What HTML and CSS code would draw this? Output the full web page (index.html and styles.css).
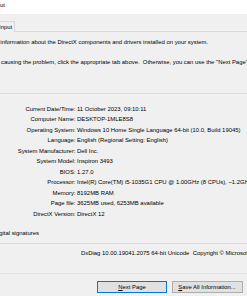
FILE: index.html
```html
<!DOCTYPE html>
<html>
<head>
<meta charset="utf-8">
<link rel="stylesheet" href="styles.css">
</head>
<body>
<div class="window">
  <div class="titlebar"><span class="title">ut</span></div>
  <div class="tabs">
    <div class="tab">Input</div>
  </div>
  <div class="page">
    <p class="intro first">This tool reports detailed information about the DirectX components and drivers installed on your system.</p>
    <p class="intro second">If you know what area is causing the problem, click the appropriate tab above.&nbsp; Otherwise, you can use the "Next Page" button below to visit each page in sequence.</p>
    <div class="group">
      <dl class="info">
        <dt>Current Date/Time:</dt><dd>11 October 2023, 09:10:11</dd>
        <dt>Computer Name:</dt><dd>DESKTOP-1MLE8S8</dd>
        <dt>Operating System:</dt><dd>Windows 10 Home Single Language 64-bit (10.0, Build 19045)</dd>
        <dt>Language:</dt><dd>English (Regional Setting: English)</dd>
        <dt>System Manufacturer:</dt><dd>Dell Inc.</dd>
        <dt>System Model:</dt><dd>Inspiron 3493</dd>
        <dt>BIOS:</dt><dd>1.27.0</dd>
        <dt>Processor:</dt><dd>Intel(R) Core(TM) i5-1035G1 CPU @ 1.00GHz (8 CPUs), ~1.2GHz</dd>
        <dt>Memory:</dt><dd>8192MB RAM</dd>
        <dt>Page file:</dt><dd>3625MB used, 6253MB available</dd>
        <dt>DirectX Version:</dt><dd>DirectX 12</dd>
      </dl>
    </div>
    <p class="check">Check for WHQL digital signatures</p>
    <div class="version">DxDiag 10.00.19041.2075 64-bit Unicode&nbsp; Copyright © Microsoft. All rights reserved.</div>
  </div>
  <div class="buttons">
    <button class="btn default"><u>N</u>ext Page</button>
    <button class="btn"><u>S</u>ave All Information...</button>
    <button class="btn">E<u>x</u>it</button>
  </div>
</div>
</body>
</html>
```

FILE: styles.css
```css
html, body {
  margin: 0;
  padding: 0;
}
body {
  width: 247px;
  height: 296px;
  overflow: hidden;
  background: #f0f0f0;
  font-family: "Liberation Sans", Arial, sans-serif;
  font-size: 5.92px;
  color: #000;
}
.window {
  width: 247px;
  height: 296px;
  overflow: hidden;
}
.titlebar {
  height: 14px;
  background: #ffffff;
  line-height: 11px;
  white-space: nowrap;
}
.tabs {
  height: 17px;
  border-bottom: 1px solid #d9d9d9;
  display: flex;
  align-items: flex-end;
}
.tab {
  height: 10px;
  line-height: 10px;
  margin-left: -4px;
  margin-bottom: -1px;
  padding: 0 2px;
  border: 1px solid #d9d9d9;
  border-bottom: none;
  background: #f0f0f0;
}
.page {
  padding-top: 4.5px;
}
.intro {
  margin: 0;
  line-height: 10.5px;
  white-space: nowrap;
}
.intro.first {
  text-indent: -66px;
}
.intro.second {
  margin-top: 9.5px;
  text-indent: -64px;
}
.group {
  margin-top: 26px;
  border-top: 1px solid #dadada;
  padding-top: 10px;
}
.info {
  margin: 0;
  display: grid;
  grid-template-columns: 75.5px 1fr;
  column-gap: 1.5px;
  line-height: 10.47px;
  white-space: nowrap;
}
.info dt {
  text-align: right;
}
.info dd {
  margin: 0;
}
.check {
  margin: 8.5px 0 0 0;
  line-height: 10.5px;
  white-space: nowrap;
  text-indent: -51.5px;
  padding-bottom: 4.5px;
  border-bottom: 1px solid #dadada;
}
.version {
  padding-left: 81px;
  line-height: 10.5px;
  padding-top: 4px;
  padding-bottom: 14.5px;
  border-bottom: 1px solid #e3e3e3;
  white-space: nowrap;
}
.buttons {
  display: flex;
  gap: 4.5px;
  padding-left: 97px;
  margin-top: 7px;
  white-space: nowrap;
}
.btn {
  flex: none;
  height: 12px;
  width: 70px;
  padding: 0;
  margin: 0;
  font-family: "Liberation Sans", Arial, sans-serif;
  font-size: 5.92px;
  line-height: 10px;
  color: #000;
  background: #e1e1e1;
  border: 1px solid #adadad;
  border-radius: 0;
}
.btn.default {
  border-color: #0078d7;
}
.btn:nth-child(2) {
  width: 71px;
}
```
